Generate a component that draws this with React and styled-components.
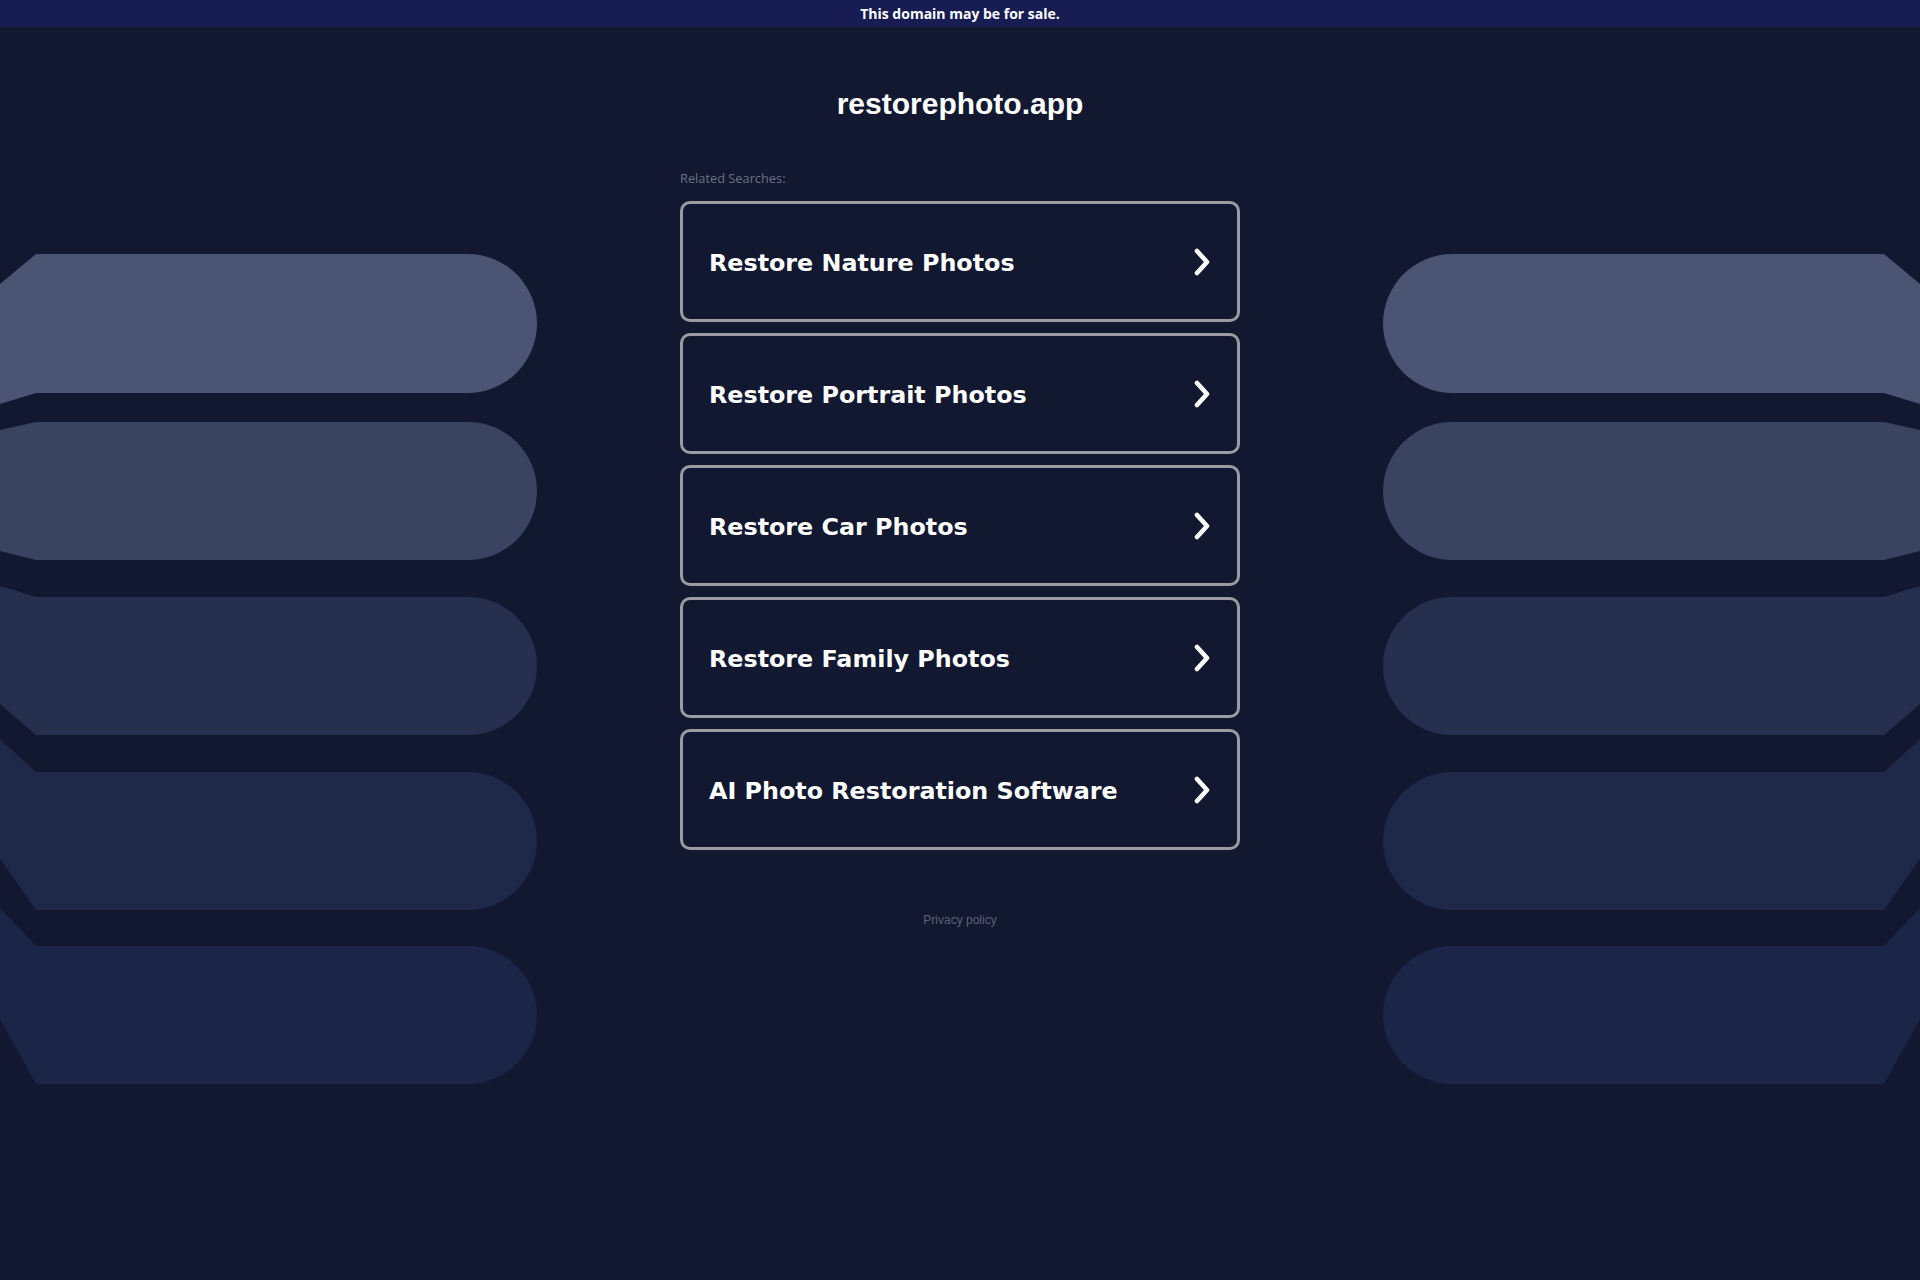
import React from "react";
import styled, { createGlobalStyle } from "styled-components";

const GlobalStyle = createGlobalStyle`
  html, body {
    margin: 0;
    padding: 0;
    background-color: #111830;
  }
  body {
    font-family: "Liberation Sans", Arial, sans-serif;
  }
`;

const Page = styled.div`
  min-height: 1280px;
  background-color: #111830;
  display: flex;
  flex-direction: column;
`;

const TopBar = styled.div`
  height: 27px;
  background-color: #171c53;
  color: #ffffff;
  font-family: "Open Sans", sans-serif;
  font-weight: 700;
  font-size: 14px;
  display: flex;
  align-items: center;
  justify-content: center;
`;

const Main = styled.div`
  display: grid;
  grid-template-columns: 1fr 560px 1fr;
`;

const ArtColumn = styled.div`
  padding-top: 226px;
  display: flex;
  justify-content: ${(props) => (props.flip ? "flex-end" : "flex-start")};
`;

const ArtSvg = styled.svg`
  display: block;
  width: 537px;
  height: 832px;
  transform: ${(props) => (props.flip ? "scaleX(-1)" : "none")};
`;

const Center = styled.div`
  display: flex;
  flex-direction: column;
  padding-top: 59px;
`;

const Title = styled.h1`
  margin: 0;
  font-family: "Liberation Sans", Arial, sans-serif;
  font-weight: 700;
  font-size: 30px;
  line-height: 36px;
  color: #ffffff;
  text-align: center;
`;

const RelatedLabel = styled.div`
  margin-top: 48px;
  margin-bottom: 15px;
  font-family: "Open Sans", sans-serif;
  font-size: 12.8px;
  line-height: 16px;
  color: #6a7187;
`;

const CardList = styled.div`
  display: flex;
  flex-direction: column;
  gap: 11px;
`;

const Card = styled.a`
  box-sizing: border-box;
  height: 121px;
  border: 3px solid #9b9ca2;
  border-radius: 10px;
  padding: 2px 27px 0 26px;
  display: flex;
  align-items: center;
  justify-content: space-between;
  color: #ffffff;
  text-decoration: none;
  font-family: "DejaVu Sans", Verdana, sans-serif;
  font-weight: 700;
  font-size: 23.8px;
`;

const Chevron = styled.svg`
  width: 16px;
  height: 28px;
  flex-shrink: 0;
  margin-top: -2px;
`;

const Privacy = styled.a`
  margin-top: 62px;
  text-align: center;
  font-family: "Liberation Sans", Arial, sans-serif;
  font-size: 12px;
  line-height: 16px;
  color: #5b6279;
  text-decoration: none;
`;

const searches = [
  "Restore Nature Photos",
  "Restore Portrait Photos",
  "Restore Car Photos",
  "Restore Family Photos",
  "AI Photo Restoration Software",
];

// top, bottom, left-edge top y, left-edge bottom y, colour
const pills = [
  [253, 392, 283, 403, "#4b5573"],
  [421, 559, 429, 550, "#3a4461"],
  [596, 734, 585, 703, "#262f4e"],
  [771, 909, 738, 858, "#1e2849"],
  [945, 1083, 907, 1018, "#1b2547"],
];

function pillPath([top, bottom, t0, b0]) {
  const r = (bottom - top) / 2;
  const x = 537 - r;
  return `M36 ${top} L${x} ${top} A${r} ${r} 0 0 1 ${x} ${bottom} L36 ${bottom} L0 ${b0} L0 ${t0} Z`;
}

function Art({ flip }) {
  return (
    <ArtColumn flip={flip}>
      <ArtSvg flip={flip} viewBox="0 252 537 832" preserveAspectRatio="none">
        {pills.map((p, i) => (
          <path key={i} d={pillPath(p)} fill={p[4]} />
        ))}
      </ArtSvg>
    </ArtColumn>
  );
}

export default function App() {
  return (
    <Page>
      <GlobalStyle />
      <TopBar>This domain may be for sale.</TopBar>
      <Main>
        <Art />
        <Center>
          <Title>restorephoto.app</Title>
          <RelatedLabel>Related Searches:</RelatedLabel>
          <CardList>
            {searches.map((s) => (
              <Card key={s} href="#">
                <span>{s}</span>
                <Chevron viewBox="0 0 16 28">
                  <path
                    d="M3 3 L13 14 L3 25"
                    fill="none"
                    stroke="#ffffff"
                    strokeWidth="4.6"
                    strokeLinecap="round"
                    strokeLinejoin="round"
                  />
                </Chevron>
              </Card>
            ))}
          </CardList>
          <Privacy href="#">Privacy policy</Privacy>
        </Center>
        <Art flip />
      </Main>
    </Page>
  );
}
